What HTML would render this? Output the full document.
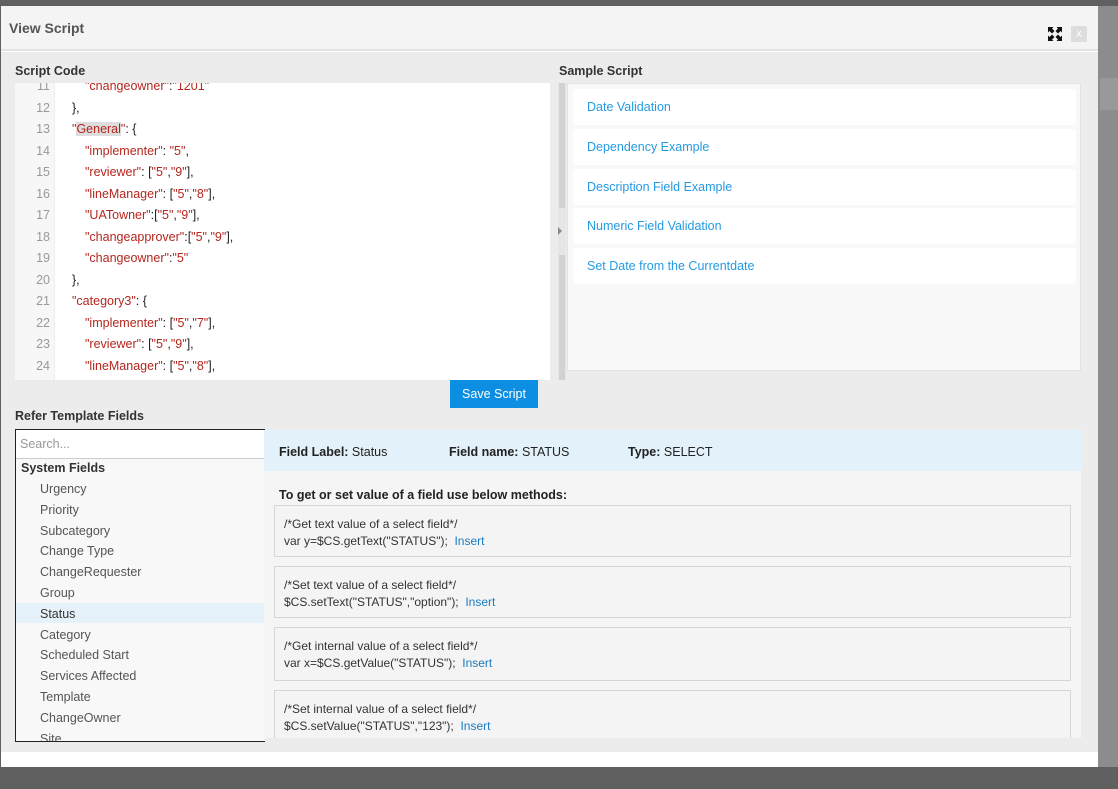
<!DOCTYPE html>
<html><head><style>
*{box-sizing:border-box;margin:0;padding:0}
body{width:1118px;height:789px;background:#606060;font-family:"Liberation Sans",sans-serif;position:relative;overflow:hidden;font-size:12.5px;color:#333}
.abs{position:absolute}
.modal{left:1px;top:6px;width:1097px;height:761px;background:#fff}
.hdr{left:0;top:0;width:1097px;height:45px;background:#f4f4f4;border-bottom:2px solid #e2e2e2}
.body{left:0;top:46px;width:1097px;height:700px;background:#ececec}
.lbl{font-weight:bold;font-size:12.5px;color:#333}
.code{left:15px;top:83px;width:535px;height:297px;background:#fff;overflow:hidden}
.gut{left:0;top:0;width:40px;height:297px;background:#f7f7f7;border-right:1px solid #eee}
.ln{position:absolute;left:0;width:35px;text-align:right;color:#999;font-size:12.5px}
.tx{position:absolute;left:57px;font-size:12.5px;color:#222;white-space:pre}
.s{color:#b5261e}
.item{position:absolute;left:5px;width:503px;height:36px;background:#fff;border-radius:3px;color:#239be3;padding:11px 0 0 14px;font-size:12.5px}
.fl{font-size:12.5px;color:#555;position:absolute;left:24px}
.box{position:absolute;left:10px;width:797px;background:#f4f4f4;border:1px solid #d6d6d6;padding:10px 0 0 9px;font-size:12px;line-height:17px;color:#333}
.ins{color:#1a7bbf}
</style></head><body>
<div class="abs" style="left:1098px;top:6px;width:20px;height:761px;background:#8c8c8c"></div>
<div class="abs" style="left:1100px;top:78px;width:18px;height:32px;background:#999"></div>
<div class="abs modal">
 <div class="abs hdr"><div class="abs" style="left:8px;top:14px;font-size:14px;font-weight:bold;color:#555">View Script</div>
  <svg class="abs" style="left:1047px;top:21px" width="14" height="14" viewBox="0 0 14 14"><g fill="#111"><path d="M0 0h5.5L4 1.5 6.5 4 4 6.5 1.5 4 0 5.5z"/><path d="M14 0v5.5L12.5 4 10 6.5 7.5 4 10 1.5 8.5 0z"/><path d="M0 14V8.5L1.5 10 4 7.5 6.5 10 4 12.5 5.5 14z"/><path d="M14 14H8.5l1.5-1.5L7.5 10 10 7.5l2.5 2.5L14 8.5z"/></g></svg>
  <div class="abs" style="left:1070px;top:20px;width:16px;height:16px;background:#ddd;color:#fff;font-size:11px;text-align:center;line-height:16px">x</div>
 </div>
 <div class="abs body"></div>
</div>
<div class="abs lbl" style="left:15px;top:64px">Script Code</div>
<div class="abs lbl" style="left:559px;top:64px">Sample Script</div>
<div class="abs code">
 <div class="abs gut"></div>
 <div class="ln" style="top:-4px">11</div><div class="tx" style="top:-4px;left:70px"><span class="s">"changeowner"</span>:<span class="s">"1201"</span></div>
 <div class="ln" style="top:18px">12</div><div class="tx" style="top:18px">},</div>
 <div class="ln" style="top:39px">13</div><div class="tx" style="top:39px"><span class="s">"<span style="background:#ddd">General</span>"</span>: {</div>
 <div class="ln" style="top:61px">14</div><div class="tx" style="top:61px;left:70px"><span class="s">"implementer"</span>: <span class="s">"5"</span>,</div>
 <div class="ln" style="top:82px">15</div><div class="tx" style="top:82px;left:70px"><span class="s">"reviewer"</span>: [<span class="s">"5"</span>,<span class="s">"9"</span>],</div>
 <div class="ln" style="top:104px">16</div><div class="tx" style="top:104px;left:70px"><span class="s">"lineManager"</span>: [<span class="s">"5"</span>,<span class="s">"8"</span>],</div>
 <div class="ln" style="top:125px">17</div><div class="tx" style="top:125px;left:70px"><span class="s">"UATowner"</span>:[<span class="s">"5"</span>,<span class="s">"9"</span>],</div>
 <div class="ln" style="top:147px">18</div><div class="tx" style="top:147px;left:70px"><span class="s">"changeapprover"</span>:[<span class="s">"5"</span>,<span class="s">"9"</span>],</div>
 <div class="ln" style="top:168px">19</div><div class="tx" style="top:168px;left:70px"><span class="s">"changeowner"</span>:<span class="s">"5"</span></div>
 <div class="ln" style="top:190px">20</div><div class="tx" style="top:190px">},</div>
 <div class="ln" style="top:211px">21</div><div class="tx" style="top:211px"><span class="s">"category3"</span>: {</div>
 <div class="ln" style="top:233px">22</div><div class="tx" style="top:233px;left:70px"><span class="s">"implementer"</span>: [<span class="s">"5"</span>,<span class="s">"7"</span>],</div>
 <div class="ln" style="top:254px">23</div><div class="tx" style="top:254px;left:70px"><span class="s">"reviewer"</span>: [<span class="s">"5"</span>,<span class="s">"9"</span>],</div>
 <div class="ln" style="top:276px">24</div><div class="tx" style="top:276px;left:70px"><span class="s">"lineManager"</span>: [<span class="s">"5"</span>,<span class="s">"8"</span>],</div>
</div>
<div class="abs" style="left:558px;top:83px;width:8px;height:297px;background:#e6e6e6"></div>
<div class="abs" style="left:559px;top:83px;width:6px;height:125px;background:#d2d2d2"></div>
<div class="abs" style="left:559px;top:255px;width:6px;height:125px;background:#d2d2d2"></div>
<div class="abs" style="left:558px;top:227px;width:0;height:0;border-left:4px solid #888;border-top:4px solid transparent;border-bottom:4px solid transparent"></div>
<div class="abs" style="left:567px;top:83px;width:514px;height:288px;background:#f8f8f8;border:1px solid #e3e3e3">
 <div class="item" style="top:5px">Date Validation</div>
 <div class="item" style="top:45px">Dependency Example</div>
 <div class="item" style="top:85px">Description Field Example</div>
 <div class="item" style="top:124px">Numeric Field Validation</div>
 <div class="item" style="top:164px">Set Date from the Currentdate</div>
</div>
<div class="abs" style="left:450px;top:380px;width:88px;height:28px;background:#0c8fe2;color:#fff;font-size:12.5px;text-align:center;line-height:28px">Save Script</div>
<div class="abs lbl" style="left:15px;top:409px">Refer Template Fields</div>
<div class="abs" style="left:15px;top:429px;width:250px;height:313px;background:#f8f8f8;border:1px solid #222;border-right:none;overflow:hidden">
 <div class="abs" style="left:0;top:0;width:249px;height:29px;background:#fff;border-bottom:1px solid #ccc;color:#999;padding:7px 4px;font-size:12.5px">Search...</div>
 <div class="abs" style="left:5px;top:31px;font-weight:bold;color:#333">System Fields</div>
 <div class="abs" style="left:0;top:173px;width:249px;height:20px;background:#e6f2f9"></div>
 <div class="fl" style="top:52px">Urgency</div>
 <div class="fl" style="top:73px">Priority</div>
 <div class="fl" style="top:94px">Subcategory</div>
 <div class="fl" style="top:114px">Change Type</div>
 <div class="fl" style="top:135px">ChangeRequester</div>
 <div class="fl" style="top:156px">Group</div>
 <div class="fl" style="top:177px;color:#333">Status</div>
 <div class="fl" style="top:198px">Category</div>
 <div class="fl" style="top:218px">Scheduled Start</div>
 <div class="fl" style="top:239px">Services Affected</div>
 <div class="fl" style="top:260px">Template</div>
 <div class="fl" style="top:281px">ChangeOwner</div>
 <div class="fl" style="top:302px">Site</div>
</div>
<div class="abs" style="left:264px;top:430px;width:817px;height:308px;background:#f5f5f5;overflow:hidden">
 <div class="abs" style="left:0;top:0;width:817px;height:41px;background:#e3f2fa"></div>
 <div class="abs" style="left:15px;top:15px;color:#222"><b>Field Label:</b> Status</div>
 <div class="abs" style="left:185px;top:15px;color:#222"><b>Field name:</b> STATUS</div>
 <div class="abs" style="left:364px;top:15px;color:#222"><b>Type:</b> SELECT</div>
 <div class="abs" style="left:15px;top:58px;font-weight:bold;color:#222">To get or set value of a field use below methods:</div>
 <div class="box" style="top:75px;height:52px">/*Get text value of a select field*/<br>var y=$CS.getText("STATUS");&nbsp; <span class="ins">Insert</span></div>
 <div class="box" style="top:136px;height:52px">/*Set text value of a select field*/<br>$CS.setText("STATUS","option");&nbsp; <span class="ins">Insert</span></div>
 <div class="box" style="top:197px;height:54px">/*Get internal value of a select field*/<br>var x=$CS.getValue("STATUS");&nbsp; <span class="ins">Insert</span></div>
 <div class="box" style="top:260px;height:60px">/*Set internal value of a select field*/<br>$CS.setValue("STATUS","123");&nbsp; <span class="ins">Insert</span></div>
</div>
</body></html>
